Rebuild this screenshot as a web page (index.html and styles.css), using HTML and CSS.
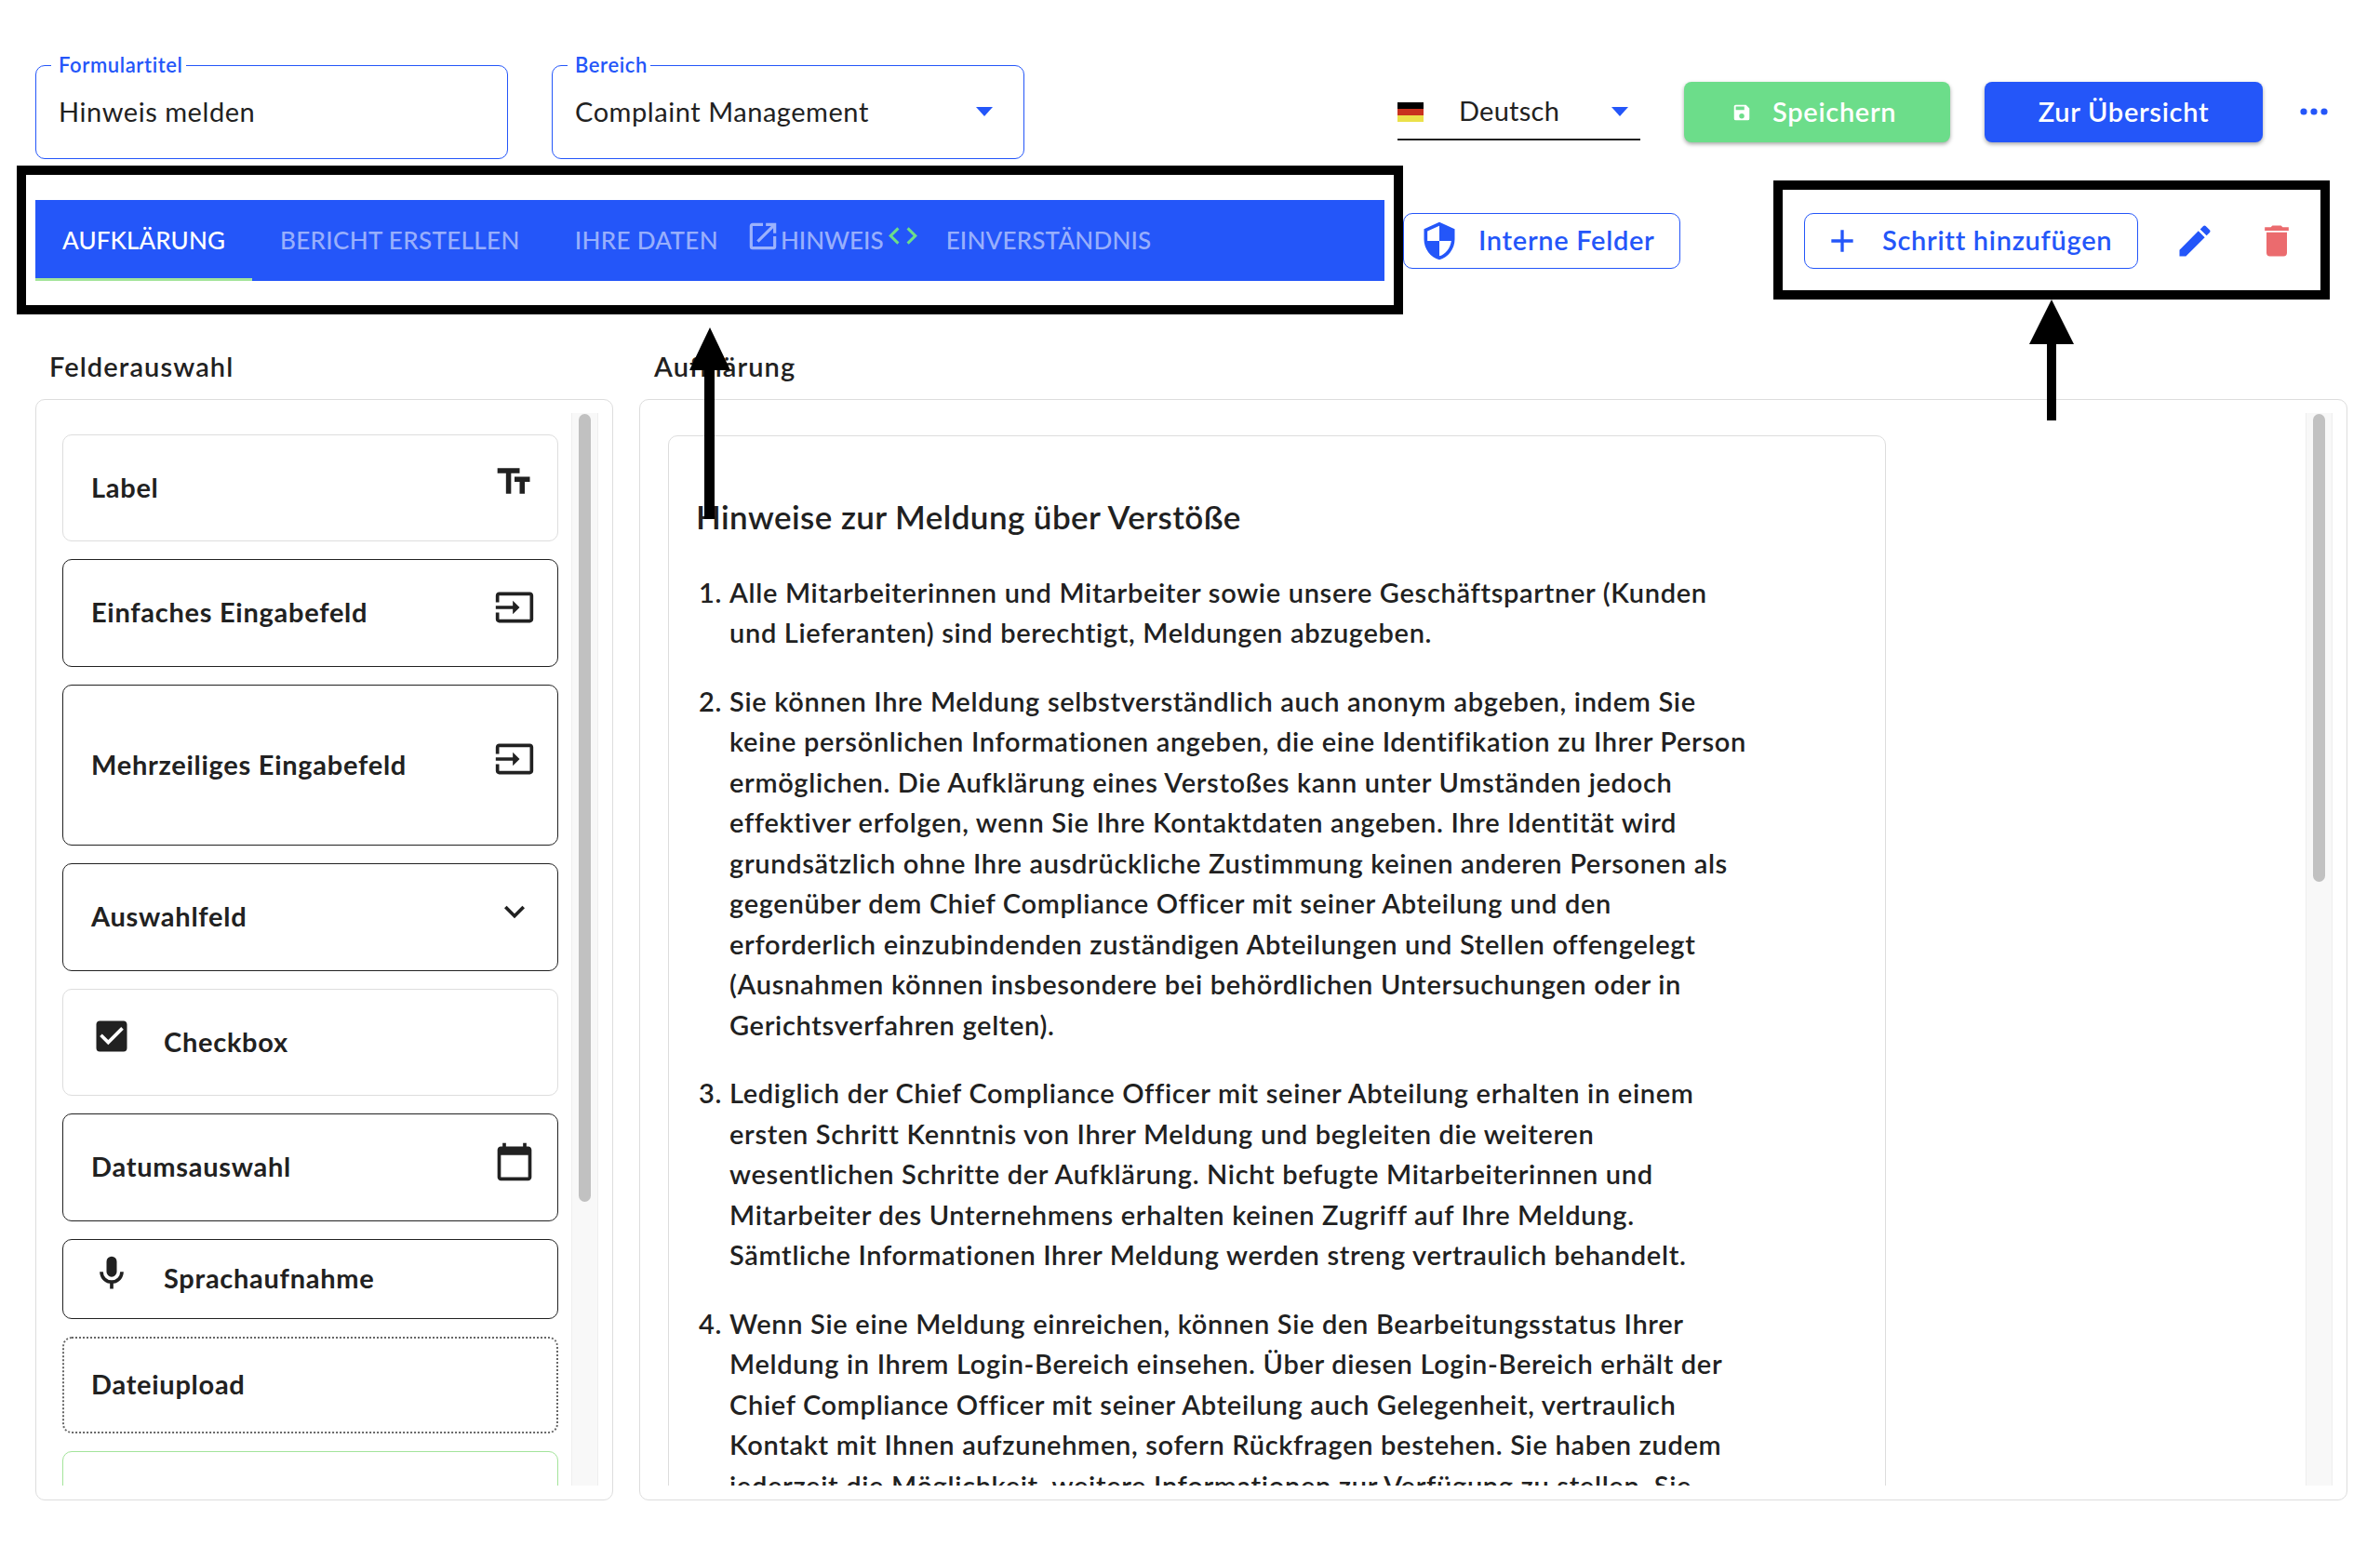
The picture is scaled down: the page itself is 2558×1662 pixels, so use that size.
FILE: index.html
```html
<!DOCTYPE html>
<html lang="de">
<head>
  <meta charset="UTF-8" />
  <title>Hinweis melden</title>
  <link rel="stylesheet" href="styles.css">
</head>
<body>

  <div class="header">
    <fieldset class="field field-title">
      <legend>Formulartitel</legend>
      <div class="field-value">Hinweis melden</div>
    </fieldset>
    <fieldset class="field field-area">
      <legend>Bereich</legend>
      <div class="field-value">Complaint Management<span class="caret"></span></div>
    </fieldset>

    <div class="lang">
      <span class="flag"><i class="flag-black"></i><i class="flag-red"></i><i class="flag-yellow"></i></span>
      <span class="lang-name">Deutsch</span>
      <span class="caret"></span>
    </div>
    <button class="btn btn-save">
      <svg class="btn-icon" viewBox="0 0 24 24"><path d="M15,9H5V5H15M12,19A3,3 0 0,1 9,16A3,3 0 0,1 12,13A3,3 0 0,1 15,16A3,3 0 0,1 12,19M17,3H5C3.89,3 3,3.9 3,5V19A2,2 0 0,0 5,21H19A2,2 0 0,0 21,19V7L17,3Z"/></svg>
      Speichern
    </button>
    <button class="btn btn-overview">Zur Übersicht</button>
    <svg class="more" viewBox="0 0 30 8"><circle cx="4" cy="4" r="3.6"/><circle cx="15" cy="4" r="3.6"/><circle cx="26" cy="4" r="3.6"/></svg>
  </div>

  <div class="toolbar">
    <div class="tabs">
      <div class="tab active">Aufklärung</div>
      <div class="tab">Bericht erstellen</div>
      <div class="tab">Ihre Daten</div>
      <div class="tab tab-icons">
        <svg class="tab-open" viewBox="0 0 24 24"><path d="M14,3V5H17.59L7.76,14.83L9.17,16.24L19,6.41V10H21V3M19,19H5V5H12V3H5C3.89,3 3,3.9 3,5V19A2,2 0 0,0 5,21H19A2,2 0 0,0 21,19V12H19V19Z"/></svg>
        Hinweis
        <svg class="tab-code" viewBox="0 0 24 24"><path d="M14.6,16.6L19.2,12L14.6,7.4L16,6L22,12L16,18L14.6,16.6M9.4,16.6L4.8,12L9.4,7.4L8,6L2,12L8,18L9.4,16.6Z"/></svg>
      </div>
      <div class="tab tab-last">Einverständnis</div>
    </div>
    <button class="btn-outline btn-internal">
      <svg class="outline-icon" viewBox="0 0 24 24"><path d="M12 1L3 5v6c0 5.55 3.84 10.74 9 12 5.16-1.26 9-6.45 9-12V5l-9-4zm0 10.99h7c-.53 4.12-3.28 7.79-7 8.94V12H5V6.3l7-3.11v8.8z"/></svg>
      Interne Felder
    </button>
    <button class="btn-outline btn-step">
      <svg class="outline-icon" viewBox="0 0 24 24"><path d="M19,13H13V19H11V13H5V11H11V5H13V11H19V13Z"/></svg>
      Schritt hinzufügen
    </button>
    <svg class="tool-icon tool-edit" viewBox="0 0 24 24"><path d="M20.71,7.04C21.1,6.65 21.1,6 20.71,5.63L18.37,3.29C18,2.9 17.35,2.9 16.96,3.29L15.12,5.12L18.87,8.87M3,17.25V21H6.75L17.81,9.93L14.06,6.18L3,17.25Z"/></svg>
    <svg class="tool-icon tool-delete" viewBox="0 0 24 24"><path d="M19,4H15.5L14.5,3H9.5L8.5,4H5V6H19M6,19A2,2 0 0,0 8,21H16A2,2 0 0,0 18,19V7H6V19Z"/></svg>
  </div>

  <div class="main">
    <div class="col col-fields">
      <div class="col-title">Felderauswahl</div>
      <div class="panel">
        <div class="scroll fields">
          <div class="item item-soft">
            <span>Label</span>
            <svg class="item-icon" viewBox="0 0 24 24"><path d="M2,4V7H7V19H10V7H15V4H2M21,9H12V12H15V19H18V12H21V9Z"/></svg>
          </div>
          <div class="item">
            <span>Einfaches Eingabefeld</span>
            <svg class="item-icon" viewBox="0 0 24 24"><path d="M21 3.01H3c-1.1 0-2 .9-2 2V9h2V4.99h18v14.03H3V15H1v4.01c0 1.1.9 1.98 2 1.98h18c1.1 0 2-.88 2-1.98v-14c0-1.11-.9-2-2-2zM11 16l4-4-4-4v3H1v2h10v3z"/></svg>
          </div>
          <div class="item item-tall">
            <span>Mehrzeiliges Eingabefeld</span>
            <svg class="item-icon" viewBox="0 0 24 24"><path d="M21 3.01H3c-1.1 0-2 .9-2 2V9h2V4.99h18v14.03H3V15H1v4.01c0 1.1.9 1.98 2 1.98h18c1.1 0 2-.88 2-1.98v-14c0-1.11-.9-2-2-2zM11 16l4-4-4-4v3H1v2h10v3z"/></svg>
          </div>
          <div class="item">
            <span>Auswahlfeld</span>
            <svg class="item-icon" viewBox="0 0 24 24"><path d="M7.41,8.58L12,13.17L16.59,8.58L18,10L12,16L6,10L7.41,8.58Z"/></svg>
          </div>
          <div class="item item-soft item-lead">
            <svg class="item-icon" viewBox="0 0 24 24"><path d="M10,17L5,12L6.41,10.58L10,14.17L17.59,6.58L19,8M19,3H5C3.89,3 3,3.89 3,5V19A2,2 0 0,0 5,21H19A2,2 0 0,0 21,19V5C21,3.89 20.1,3 19,3Z"/></svg>
            <span>Checkbox</span>
          </div>
          <div class="item">
            <span>Datumsauswahl</span>
            <svg class="item-icon" viewBox="0 0 24 24"><path d="M20 3h-1V1h-2v2H7V1H5v2H4c-1.1 0-2 .9-2 2v16c0 1.1.9 2 2 2h16c1.1 0 2-.9 2-2V5c0-1.1-.9-2-2-2zm0 18H4V8h16v13z"/></svg>
          </div>
          <div class="item item-short item-lead">
            <svg class="item-icon" viewBox="0 0 24 24"><path d="M12,2A3,3 0 0,1 15,5V11A3,3 0 0,1 12,14A3,3 0 0,1 9,11V5A3,3 0 0,1 12,2M19,11C19,14.53 16.39,17.44 13,17.93V21H11V17.93C7.61,17.44 5,14.53 5,11H7A5,5 0 0,0 12,16A5,5 0 0,0 17,11H19Z"/></svg>
            <span>Sprachaufnahme</span>
          </div>
          <div class="item item-dotted">
            <span>Dateiupload</span>
          </div>
          <div class="item item-green"></div>
        </div>
        <div class="track"><div class="thumb thumb-fields"></div></div>
      </div>
    </div>

    <div class="col col-content">
      <div class="col-title">Aufklärung</div>
      <div class="panel">
        <div class="scroll content">
          <div class="text-card">
            <h3>Hinweise zur Meldung über Verstöße</h3>
            <ol>
              <li>Alle Mitarbeiterinnen und Mitarbeiter sowie unsere Geschäftspartner (Kunden<br>und Lieferanten) sind berechtigt, Meldungen abzugeben.</li>
              <li>Sie können Ihre Meldung selbstverständlich auch anonym abgeben, indem Sie<br>keine persönlichen Informationen angeben, die eine Identifikation zu Ihrer Person<br>ermöglichen. Die Aufklärung eines Verstoßes kann unter Umständen jedoch<br>effektiver erfolgen, wenn Sie Ihre Kontaktdaten angeben. Ihre Identität wird<br>grundsätzlich ohne Ihre ausdrückliche Zustimmung keinen anderen Personen als<br>gegenüber dem Chief Compliance Officer mit seiner Abteilung und den<br>erforderlich einzubindenden zuständigen Abteilungen und Stellen offengelegt<br>(Ausnahmen können insbesondere bei behördlichen Untersuchungen oder in<br>Gerichtsverfahren gelten).</li>
              <li>Lediglich der Chief Compliance Officer mit seiner Abteilung erhalten in einem<br>ersten Schritt Kenntnis von Ihrer Meldung und begleiten die weiteren<br>wesentlichen Schritte der Aufklärung. Nicht befugte Mitarbeiterinnen und<br>Mitarbeiter des Unternehmens erhalten keinen Zugriff auf Ihre Meldung.<br>Sämtliche Informationen Ihrer Meldung werden streng vertraulich behandelt.</li>
              <li>Wenn Sie eine Meldung einreichen, können Sie den Bearbeitungsstatus Ihrer<br>Meldung in Ihrem Login-Bereich einsehen. Über diesen Login-Bereich erhält der<br>Chief Compliance Officer mit seiner Abteilung auch Gelegenheit, vertraulich<br>Kontakt mit Ihnen aufzunehmen, sofern Rückfragen bestehen. Sie haben zudem<br>jederzeit die Möglichkeit, weitere Informationen zur Verfügung zu stellen. Sie</li>
            </ol>
          </div>
        </div>
        <div class="track"><div class="thumb thumb-content"></div></div>
      </div>
    </div>
  </div>

  <!-- annotations drawn on top of the screenshot -->
  <div class="frame frame-tabs"></div>
  <div class="frame frame-step"></div>
  <svg class="arrow arrow-tabs" viewBox="0 0 44 206"><polygon points="22,0 44,46 27,46 27,206 16,206 16,46 0,46"/></svg>
  <svg class="arrow arrow-step" viewBox="0 0 48 130"><polygon points="24,0 48,48 29,48 29,130 19,130 19,48 0,48"/></svg>

</body>
</html>
```

FILE: styles.css
```css
html, body {
  margin: 0;
  padding: 0;
}
body {
  position: relative;
  width: 2558px;
  height: 1662px;
  overflow: hidden;
  background: white;
  color: #212121;
  font-family: Lato, "Noto Sans", sans-serif;
  font-size: 29px;
  line-height: 43.5px;
}
svg {
  display: block;
  flex: none;
  fill: currentColor;
}

/* Header row */
.header {
  display: flex;
  align-items: flex-start;
  padding: 57px 0 0 38px;
}
.field {
  box-sizing: border-box;
  height: 114px;
  margin: 0;
  padding: 0 24px 12px;
  border: 1px solid #2456f9;
  border-radius: 10px;
  letter-spacing: 0.55px;
}
.field legend {
  margin-left: -8px;
  padding: 0 3px 0 8px;
  color: #2456f9;
  font-size: 22px;
  line-height: 26px;
  font-weight: 600;
  letter-spacing: 0.6px;
}
.field-title { width: 508px; }
.field-area { width: 508px; margin-left: 47px; }
.field-value {
  display: flex;
  align-items: center;
  justify-content: space-between;
  height: 74px;
}
.caret {
  width: 0;
  height: 0;
  border-left: 9px solid transparent;
  border-right: 9px solid transparent;
  border-top: 10px solid #2456f9;
}
.field-value .caret { margin-right: 9px; }

.lang {
  box-sizing: border-box;
  display: flex;
  align-items: center;
  width: 261px;
  height: 51px;
  margin: 43px 0 0 401px;
  padding-bottom: 9px;
  border-bottom: 2px solid #212121;
}
.flag {
  display: flex;
  flex-direction: column;
  width: 28px;
  height: 21px;
}
.flag i { flex: 1; }
.flag-black { background: #000; }
.flag-red { background: #c8321f; }
.flag-yellow { background: #ebe14a; }
.lang-name {
  margin: -2px 0 0 38px;
  letter-spacing: 0.25px;
}
.lang .caret { margin-left: 56px; }

.btn {
  display: flex;
  align-items: center;
  box-sizing: border-box;
  height: 65px;
  margin-top: 31px;
  padding-bottom: 2px;
  border: none;
  border-radius: 8px;
  color: white;
  font: inherit;
  font-weight: 600;
  letter-spacing: 0.7px;
  box-shadow: 0 2px 4px rgba(0, 0, 0, 0.35);
}
.btn-save {
  width: 286px;
  margin-left: 47px;
  padding-left: 51px;
  background: #6cdd8a;
}
.btn-icon {
  width: 22px;
  height: 22px;
  margin: 2px 22px 0 0;
}
.btn-overview {
  justify-content: center;
  width: 299px;
  margin-left: 37px;
  background: #2456f9;
}
.more {
  width: 30px;
  height: 8px;
  margin: 59px 0 0 40px;
  color: #2456f9;
}

/* Tabs and step actions */
.toolbar {
  display: flex;
  align-items: center;
  margin-top: 44px;
  padding-left: 38px;
}
.tabs {
  display: flex;
  width: 1450px;
  height: 87px;
  background: #2456f9;
}
.tab {
  display: flex;
  align-items: center;
  box-sizing: border-box;
  height: 87px;
  padding: 0 29px 0 30px;
  color: rgba(255, 255, 255, 0.55);
  font-size: 26px;
  font-weight: 500;
  letter-spacing: 0.35px;
  text-transform: uppercase;
}
.tab.active {
  color: white;
  border-bottom: 3px solid #a3e49a;
  padding: 3px 29px 0 29px;
  letter-spacing: 0.1px;
}
.tab-icons {
  padding: 0;
  letter-spacing: 0;
}
.tab-open {
  width: 38px;
  height: 38px;
  margin: -10px 0 0 0;
}
.tab-code {
  width: 37px;
  height: 37px;
  margin: -10px 0 0 2px;
  color: #6cdd8a;
}
.tab-last {
  padding-left: 28px;
  letter-spacing: 0.2px;
}
.btn-outline {
  display: flex;
  align-items: center;
  box-sizing: border-box;
  height: 60px;
  padding: 0 0 2px;
  border: 1px solid #2456f9;
  border-radius: 10px;
  background: white;
  color: #2456f9;
  font: inherit;
  font-weight: 600;
  letter-spacing: 0.7px;
}
.btn-internal {
  width: 298px;
  margin-left: 20px;
  padding-left: 16px;
}
.btn-internal .outline-icon {
  width: 44px;
  height: 44px;
  margin: 2px 20px 0 0;
}
.btn-step {
  width: 359px;
  margin-left: 133px;
  padding-left: 20px;
}
.btn-step .outline-icon {
  width: 40px;
  height: 40px;
  margin: 2px 23px 0 0;
}
.tool-icon {
  width: 44px;
  height: 44px;
}
.tool-edit {
  margin-left: 39px;
  color: #2456f9;
}
.tool-delete {
  margin-left: 44px;
  color: #eb6b6e;
}

/* Main columns */
.main {
  display: flex;
  gap: 28px;
  margin-top: 70px;
  padding-left: 38px;
}
.col-fields { width: 621px; }
.col-content { width: 1836px; }
.col-title {
  margin-bottom: 13px;
  padding-left: 15px;
  font-weight: 600;
  letter-spacing: 1.1px;
}
.col-content .col-title { padding-left: 16px; }
.panel {
  display: flex;
  box-sizing: border-box;
  height: 1184px;
  padding: 14px 15px 15px 0;
  border: 1px solid #ddd;
  border-radius: 10px;
}
.scroll {
  flex: 1;
  min-width: 0;
  overflow: hidden;
}
.track {
  box-sizing: border-box;
  flex: none;
  width: 29px;
  padding: 1px 7px;
  background: #f8f8f8;
  border-left: 1px solid #eee;
  border-right: 1px solid #eee;
}
.thumb {
  background: #c1c1c1;
  border-radius: 8px;
}
.thumb-fields { height: 847px; }
.thumb-content { height: 503px; }

/* Field list */
.fields {
  display: flex;
  flex-direction: column;
  gap: 19px;
  padding: 23px 14px 0 28px;
}
.item {
  box-sizing: border-box;
  flex: none;
  display: flex;
  align-items: center;
  justify-content: space-between;
  height: 115.5px;
  padding: 0 24px 2px 30px;
  border: 1px solid #212121;
  border-radius: 10px;
  font-weight: 700;
  letter-spacing: 0.72px;
}
.item-icon {
  width: 44px;
  height: 44px;
  margin-bottom: 10px;
}
.item-soft { border-color: #ddd; }
.item-tall { height: 173.5px; }
.item-short { height: 86px; }
.item-dotted {
  height: 104px;
  padding-left: 29px;
  border: 2px dotted #666;
}
.item-green { border-color: #a3e49a; }
.item-lead {
  justify-content: flex-start;
  gap: 34px;
}

/* Text preview */
.content {
  padding: 24px 0 0 30px;
}
.text-card {
  box-sizing: border-box;
  width: 1309px;
  padding: 64px 30px 0;
  border: 1px solid #ddd;
  border-radius: 10px 10px 0 0;
  font-weight: 600;
  letter-spacing: 0.68px;
}
.text-card h3 {
  margin: 0 0 38px -1px;
  font-size: 35px;
  line-height: 44px;
  font-weight: 600;
  letter-spacing: 0.42px;
}
.text-card ol {
  margin: 0;
  padding-left: 35px;
}
.text-card li {
  margin-bottom: 30px;
}

/* Annotations */
.frame {
  position: absolute;
  box-sizing: border-box;
  border: 10px solid black;
}
.frame-tabs {
  left: 18px;
  top: 178px;
  width: 1490px;
  height: 160px;
}
.frame-step {
  left: 1906px;
  top: 194px;
  width: 598px;
  height: 128px;
}
.arrow {
  position: absolute;
  fill: black;
}
.arrow-tabs {
  left: 741px;
  top: 352px;
  width: 44px;
  height: 206px;
}
.arrow-step {
  left: 2181px;
  top: 322px;
  width: 48px;
  height: 130px;
}
```
